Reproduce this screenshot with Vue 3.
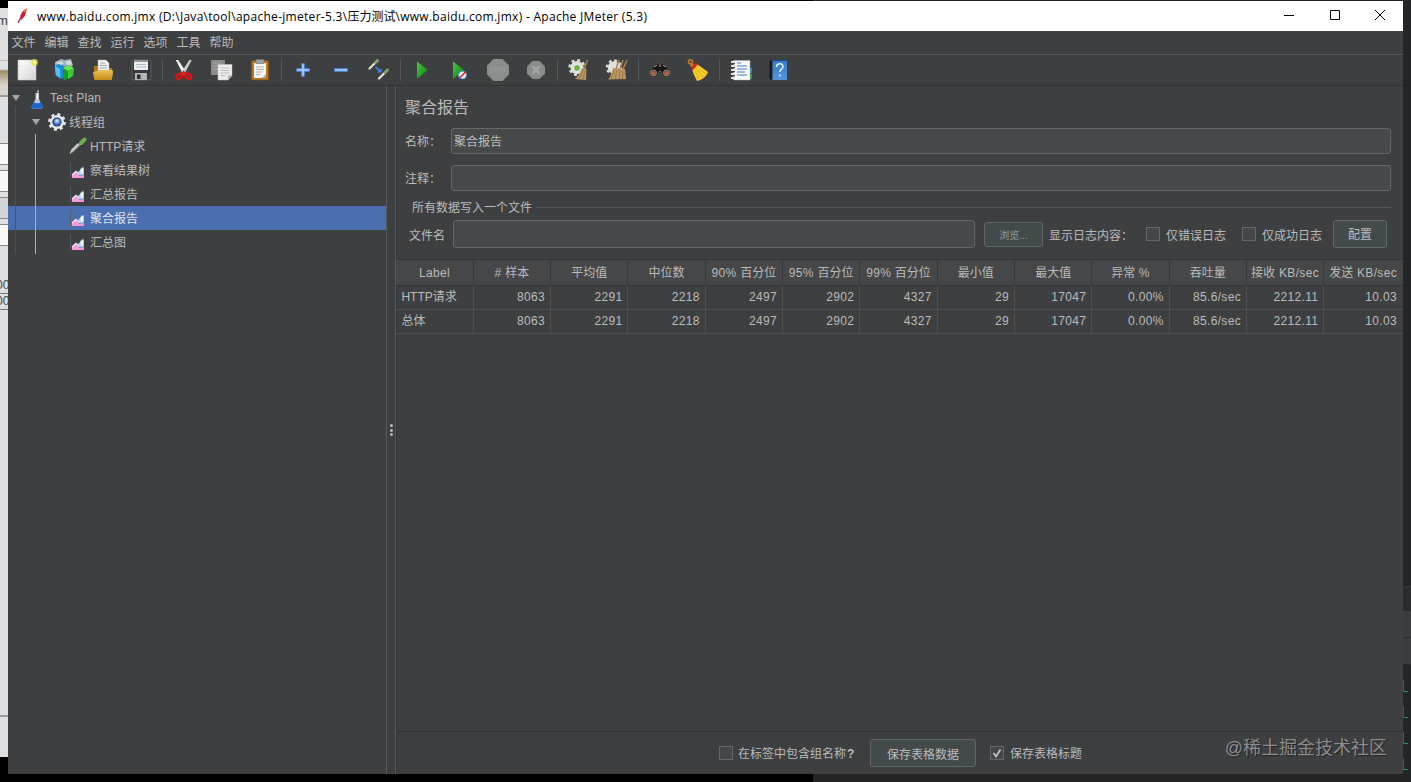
<template>
  <div class="desktop">
    <!-- アイコン定義 -->
    <svg class="defs" aria-hidden="true">
      <defs>
        <linearGradient id="gGreen" x1="0" y1="0" x2="1" y2="1">
          <stop offset="0" stop-color="#4fc948" /><stop offset="1" stop-color="#047d08" />
        </linearGradient>
        <linearGradient id="gPaper" x1="0" y1="0" x2="1" y2="1">
          <stop offset="0" stop-color="#ffffff" /><stop offset="1" stop-color="#d4d4d4" />
        </linearGradient>
        <linearGradient id="gFolder" x1="0" y1="0" x2="0" y2="1">
          <stop offset="0" stop-color="#ecc257" /><stop offset="1" stop-color="#c98a16" />
        </linearGradient>
        <linearGradient id="gBook" x1="0" y1="0" x2="0" y2="1">
          <stop offset="0" stop-color="#3478c8" /><stop offset="1" stop-color="#5594dc" />
        </linearGradient>
        <radialGradient id="gGlow">
          <stop offset="0" stop-color="#ffffb0" /><stop offset=".5" stop-color="#e6e34c" /><stop offset="1" stop-color="#e6e34c" stop-opacity="0" />
        </radialGradient>
        <radialGradient id="gBall" cx=".4" cy=".35">
          <stop offset="0" stop-color="#e4f1ff" /><stop offset="1" stop-color="#3a66b6" />
        </radialGradient>

        <symbol id="new" viewBox="0 0 24 24">
          <path d="M3 2h18v20H3z" fill="url(#gPaper)" stroke="#c8c8c8" stroke-width=".6" />
          <path d="M4.500 4v16" stroke="#ccc" stroke-dasharray="1 3" />
          <circle cx="19.500" cy="4.500" r="4.200" fill="url(#gGlow)" />
        </symbol>
        <symbol id="templates" viewBox="0 0 24 24">
          <path d="M2 4l6-3 4 1 6-1 2 6-4 5-9-1-5-2z" fill="#9fb1ba" />
          <path d="M3 5l5-2 3 2-4 3zM12 4l5-2 2 4-4 2z" fill="#cfdbe0" />
          <path d="M1.500 8l4-2 6 2v12l-4 1-5-4z" fill="#198fd8" />
          <path d="M2 8l5 3v9l-4-3z" fill="#55c3f4" />
          <path d="M10 10l5-3 6 3-1 8-8 4-2-1z" fill="#159b1b" />
          <path d="M10 10l5-3 6 3-6 3z" fill="#68e555" />
          <path d="M15 13l6-3-1 8-5 3z" fill="#3bc83a" />
        </symbol>
        <symbol id="open" viewBox="0 0 24 24">
          <path d="M3 8h7l1 2h10v11H3z" fill="#b77a14" />
          <path d="M7 2h8l3 3v11H7z" fill="#f4f4f4" stroke="#bbb" stroke-width=".5" />
          <path d="M9 5h5M9 7.500h7M9 10h7" stroke="#999" stroke-width=".9" />
          <path d="M2 14c3 0 4-2 7-2h11c2 0 2 1 2 2l-1 7c0 1-1 1-2 1H4c-1 0-1-1-1-2z" fill="url(#gFolder)" />
        </symbol>
        <symbol id="save" viewBox="0 0 24 24">
          <path d="M3 3l1-1h16l2 2v16l-1 2H4l-1-1z" fill="#37393c" stroke="#6d7073" stroke-width=".7" />
          <path d="M5 2h14v10H5z" fill="#eef1f4" />
          <path d="M5 2h14v2H5z" fill="#8d98a6" />
          <path d="M7 6.500h10M7 9h10" stroke="#a9b8c8" />
          <path d="M6 15h12v7H6z" fill="#b3b6b9" />
          <path d="M8 16.500h3.500v4.500H8z" fill="#2c2e30" />
        </symbol>
        <symbol id="cut" viewBox="0 0 24 24">
          <path d="M3.800 2l2.400 0 7.300 11-2.500 3z" fill="#f4f4f4" />
          <path d="M19.700 2l-2.400 0-7.800 12 2.500 3z" fill="#c9cccc" />
          <ellipse cx="7.300" cy="18.300" rx="3" ry="2.200" transform="rotate(-38 7.300 18.300)" fill="none" stroke="#d81515" stroke-width="2.700" />
          <ellipse cx="16.300" cy="18.300" rx="3" ry="2.200" transform="rotate(38 16.300 18.300)" fill="none" stroke="#d81515" stroke-width="2.700" />
          <path d="M10 14.500l1.800-2 1.800 2-1.800 2z" fill="#d81515" />
        </symbol>
        <symbol id="copy" viewBox="0 0 24 24">
          <path d="M1 2h14v15H1z" fill="#8a8c8c" />
          <path d="M3 5h9M3 8h6M3 11h6" stroke="#a5a7a7" />
          <path d="M8 6.500h14v11l-4 4.500H8z" fill="#ecedec" stroke="#c5c5c5" stroke-width=".5" />
          <path d="M10.500 10h9M10.500 12.500h9M10.500 15h9M10.500 17.500h5" stroke="#b5b5b5" stroke-width=".9" />
          <path d="M18 22v-4.500h4z" fill="#b0b2b2" />
        </symbol>
        <symbol id="paste" viewBox="0 0 24 24">
          <rect x="3.500" y="2.500" width="17" height="19.500" rx="1.500" fill="#b5751f" stroke="#8a5513" stroke-width=".6" />
          <path d="M6 5h12v15H6z" fill="#f5f5f5" />
          <path d="M8 1.500h8v4H8z" fill="#a3a59f" stroke="#6e6f6a" stroke-width=".6" />
          <path d="M8 9h8M8 11.500h8M8 14h6M8 16.500h4" stroke="#aaa" stroke-width=".9" />
          <path d="M14 20l4-4v4z" fill="#adadad" />
        </symbol>
        <symbol id="plus" viewBox="0 0 24 24">
          <path d="M10.700 5.700h2.600v5h5v2.600h-5v5h-2.600v-5h-5v-2.600h5z" fill="#a9ccff" stroke="#4a86dc" stroke-width="1" />
        </symbol>
        <symbol id="minus" viewBox="0 0 24 24">
          <path d="M5.500 10.700h13v2.600h-13z" fill="#a9ccff" stroke="#4a86dc" stroke-width="1" />
        </symbol>
        <symbol id="toggle" viewBox="0 0 24 24">
          <path d="M2.500 10.500l5-5" stroke="#e4e4e0" stroke-width="2.200" stroke-linecap="round" />
          <path d="M8.500 4.500l2-2" stroke="#86a86c" stroke-width="2.800" stroke-linecap="round" />
          <path d="M12 20.500l5-5" stroke="#e4e4e0" stroke-width="2.200" stroke-linecap="round" />
          <path d="M18 14.500l2.500-2.500" stroke="#86a86c" stroke-width="2.800" stroke-linecap="round" />
          <path d="M8.500 9l4 3.500" stroke="#3d8ff0" stroke-width="1.600" />
          <path d="M14.500 10v4.500H10z" fill="#3d8ff0" />
        </symbol>
        <symbol id="start" viewBox="0 0 24 24">
          <path d="M7 3.500L18 12 7 21z" fill="url(#gGreen)" />
        </symbol>
        <symbol id="startnp" viewBox="0 0 24 24">
          <path d="M5 3.500L16 12 5 21z" fill="url(#gGreen)" />
          <circle cx="14.500" cy="17" r="4" fill="#f1f3ff" stroke="#5182cf" stroke-width="1" />
          <path d="M11.500 20l6-6" stroke="#d32222" stroke-width="1.600" />
        </symbol>
        <symbol id="stop" viewBox="0 0 24 24">
          <path d="M7.500 1h9L23 7.500v9L16.500 23h-9L1 16.500v-9z" fill="#8b8d8d" />
          <path d="M7 10H4.500v2H7v2.200H4.300M8.500 10h3M10 10v4.500M12.800 10h2.400v4.200h-2.400zM17 14.700V10h2.500v2.400H17" fill="none" stroke="#979999" stroke-width="1" />
        </symbol>
        <symbol id="shutdown" viewBox="0 0 24 24">
          <path d="M8.500 3h7L21 8.500v7L15.500 21h-7L3 15.500v-7z" fill="#8b8d8d" />
          <path d="M8.500 8.500l7 7M15.500 8.500l-7 7" stroke="#a3a5a5" stroke-width="2.800" />
        </symbol>
        <symbol id="clear" viewBox="0 0 24 24">
          <circle cx="10" cy="9.500" r="7.400" fill="none" stroke="#dcddd9" stroke-width="2.400" stroke-dasharray="2.900 2.900" />
          <circle cx="10" cy="9.500" r="6.600" fill="#e0e1dd" />
          <circle cx="10" cy="10" r="2.800" fill="#6cb544" />
          <path d="M20.500 2L17 11" stroke="#a17a47" stroke-width="1.800" />
          <path d="M15 10l4.500 1.500L19 22 8 21c4-3 5-7 7-11z" fill="#b99562" />
          <path d="M16 12l-4 9M18 13l-2 8" stroke="#94703f" stroke-width=".8" />
        </symbol>
        <symbol id="clearall" viewBox="0 0 24 24">
          <circle cx="9" cy="9.500" r="7" fill="none" stroke="#dcddd9" stroke-width="2.400" stroke-dasharray="2.750 2.750" />
          <circle cx="9" cy="9.500" r="6.200" fill="#e0e1dd" />
          <path d="M14 2l-3 9M18 2l-3 9M22 2l-4 9" stroke="#a98350" stroke-width="1.500" />
          <path d="M8 10l12 1 1 10-18 0.500c3-3 4-7 5-11.500z" fill="#b99562" />
          <path d="M9 12l-3 9M12 12l-2 9M15 12l-1 9M18 13l-.5 8" stroke="#94703f" stroke-width=".8" />
        </symbol>
        <symbol id="search" viewBox="0 0 24 24">
          <path d="M6 7l3-2 3 2 3-2 3 2 5 8c0 6-8 6-9 1l-1-3h-2l-1 3c-1 5-9 5-9-1z" fill="#1a1918" stroke="#5c5c5a" stroke-width=".7" />
          <path d="M6 9l3-2M18 9l-3-2M11 8h2" stroke="#b0b0ae" stroke-width="1" />
          <circle cx="5.500" cy="15" r="3" fill="#8a4a30" stroke="#999" stroke-width=".8" />
          <circle cx="18.500" cy="15" r="3" fill="#8a4a30" stroke="#999" stroke-width=".8" />
          <circle cx="5.500" cy="15.500" r="1.400" fill="#c0704a" /><circle cx="18.500" cy="15.500" r="1.400" fill="#c0704a" />
        </symbol>
        <symbol id="broom" viewBox="0 0 24 24">
          <circle cx="4.500" cy="3.800" r="2" fill="none" stroke="#c87a2a" stroke-width="1.600" />
          <path d="M5 6l4 4" stroke="#c87a2a" stroke-width="3.400" />
          <path d="M6 11l5-5 11 8c-1 4-6 8-11 9-2-4-4-8-5-12z" fill="#f4cc2b" />
          <path d="M5.500 11.500l5.500-6" stroke="#cf2a18" stroke-width="2.600" />
          <path d="M9 13l4 8M11 12l6 7M13 11l7 5" stroke="#d3a31a" stroke-width=".7" />
        </symbol>
        <symbol id="notes" viewBox="0 0 24 24">
          <path d="M20 10h3v5h-3z" fill="#2f7fd6" /><path d="M20 16h3v5h-3z" fill="#21a32b" />
          <path d="M4.500 2.500H21V22H4.500z" fill="#fbfbfb" stroke="#b7b7b7" stroke-width=".5" />
          <path d="M8 5h4M8 8h10M8 11h10M8 14h8M8 17h10" stroke="#3f7cc0" stroke-width="1.100" />
          <path d="M2 4h4M2 8h4M2 12h4M2 16h4M2 20h4" stroke="#e2e2e2" stroke-width="1.800" />
          <path d="M4 5.700h2M4 9.700h2M4 13.700h2M4 17.700h2" stroke="#444" stroke-width="1.200" />
        </symbol>
        <symbol id="help" viewBox="0 0 24 24">
          <path d="M2.500 3l3-1v20l-3-1z" fill="#161a20" />
          <path d="M5.500 2H20v20H5.500z" fill="url(#gBook)" />
          <path d="M5.500 2.500H20" stroke="#1b4f92" />
          <path d="M9.500 9c0-4.300 6.500-4.300 6.500-.4 0 2.500-3.200 2.700-3.200 5.400M12.800 16.500v2" fill="none" stroke="#e6effa" stroke-width="1.600" />
        </symbol>

        <symbol id="flask" viewBox="0 0 20 20">
          <path d="M8.500 4h3.500v6l4 8c0 1-1 1.500-2 1.500H6.500c-1 0-2-.5-2-1.500l4-8z" fill="#c2c9cf" />
          <path d="M10.500 4v6" stroke="#fff" stroke-width="1.300" fill="none" />
          <path d="M7 13h6.700l2.300 5c0 1-1 1.500-2 1.500H6.500c-1 0-2-.5-2-1.500z" fill="#1766cc" />
          <ellipse cx="10.300" cy="13.300" rx="3" ry="1" fill="#9fcbf7" />
          <path d="M11 1.500v2" stroke="#dfe5ea" stroke-width="1.500" />
        </symbol>
        <symbol id="gear" viewBox="0 0 20 20">
          <circle cx="10" cy="10" r="7.500" fill="none" stroke="#e6e7e8" stroke-width="2.800" stroke-dasharray="2.950 2.950" />
          <circle cx="10" cy="10" r="7" fill="#e6e7e8" />
          <circle cx="10" cy="10" r="4.600" fill="#1b3f86" />
          <circle cx="10.500" cy="10" r="3.600" fill="url(#gBall)" />
        </symbol>
        <symbol id="dropper" viewBox="0 0 20 20">
          <path d="M1.500 18l2-4.500 7-7 2 2-7.500 7.500z" fill="#d5dbd5" />
          <path d="M2 18l9-9.500" stroke="#8c908c" stroke-width=".8" />
          <path d="M9.500 5.500l5 5" stroke="#222" stroke-width="1.600" />
          <path d="M12.500 7.500l4-4" stroke="#6fae52" stroke-width="4" stroke-linecap="round" />
        </symbol>
        <symbol id="chart" viewBox="0 0 20 20">
          <path d="M2.500 2v16.500" stroke="#5b5d60" stroke-width=".8" />
          <path d="M4 18v-3l4-3.500 3 2.500 5-1v5z" fill="#f49ad4" />
          <path d="M4 15l4-3.500 3 2.500" fill="none" stroke="#ffd9f2" stroke-width="1.600" />
          <path d="M9 12.500c3-.5 3-5 6.500-5.500v7c-1 2-3 2.500-4.500 1z" fill="#b4d4f8" />
          <path d="M12.500 10c1-1.500 2-2 3-2v5.500c-2 1-3 0-3-3.500z" fill="#f0f7ff" />
          <path d="M11 15.500c2 .5 3.500 0 4.500-1.500" fill="none" stroke="#6f84cc" stroke-width="1" />
        </symbol>
      </defs>
    </svg>

    <!-- 左側に見えている背面ウィンドウ -->
    <div class="behind-left">
      <div class="behind-left__m">m</div>
      <div class="behind-left__bar"></div>
      <div class="behind-left__slot plain"></div>
      <div class="behind-left__slot"></div>
      <div class="behind-left__slot"></div>
      <div class="behind-left__slot grey"></div>
      <div class="behind-left__slot"></div>
      <div class="behind-left__gap"></div>
      <div class="behind-left__num">00</div>
      <div class="behind-left__num">00</div>
      <div class="behind-left__rest"></div>
      <div class="behind-left__foot"></div>
    </div>

    <main class="window">
      <header class="titlebar">
        <svg class="feather" viewBox="0 0 12 18">
          <path d="M1 16L3.500 11" stroke="#7b3146" stroke-width="1.200" />
          <path d="M3 11.500C3 7 6 3 9.500 1.500 9.500 6 8 10 4 13z" fill="#c9213a" />
          <path d="M6.500 5C7.500 3 8.500 2 9.700 1.300l-.5 4z" fill="#ee8b2c" />
        </svg>
        <span class="titlebar__text">www.baidu.com.jmx (D:\Java\tool\apache-jmeter-5.3\<span class="song">压力测试</span>\www.baidu.com.jmx) - Apache JMeter (5.3)</span>
        <div class="titlebar__ctrl">
          <svg viewBox="0 0 12 12"><path d="M1 5.500h10" /></svg>
          <svg viewBox="0 0 12 12"><path d="M1.500 .500h9v9h-9z" /></svg>
          <svg viewBox="0 0 12 12"><path d="M1 0l10 10M11 0L1 10" /></svg>
        </div>
      </header>

      <nav class="menu">
        <span v-for="m in menus" :key="m">{{ m }}</span>
      </nav>

      <div class="toolbar">
        <template v-for="(group, gi) in tools" :key="gi">
          <i v-if="gi" class="toolbar__sep"></i>
          <button v-for="t in group" :key="t" class="tool"><svg><use :href="'#' + t" /></svg></button>
        </template>
      </div>

      <div class="body">
        <aside class="tree">
          <div
            v-for="n in nodes"
            :key="n.label"
            class="node"
            :class="['lv' + n.level, { active: n.label === selected }]"
            @click="selected = n.label"
          >
            <i v-if="n.level < 2" class="node__arrow"></i>
            <svg class="node__icon"><use :href="'#' + n.icon" /></svg>
            <span class="node__label">{{ n.label }}</span>
          </div>
          <i class="guide guide--root"></i>
          <i class="guide guide--group"></i>
        </aside>

        <div class="divider"><i></i><i></i><i></i></div>

        <section class="panel">
          <h1>聚合报告</h1>
          <label class="field"><span>名称：</span><input v-model="name" /></label>
          <label class="field"><span>注释：</span><input v-model="comment" /></label>

          <div class="legend"><span>所有数据写入一个文件</span></div>
          <div class="filerow">
            <span class="filerow__label">文件名</span>
            <input v-model="filename" />
            <button class="btn browse">浏览...</button>
            <span class="filerow__log">显示日志内容：</span>
            <label class="check"><i></i>仅错误日志</label>
            <label class="check"><i></i>仅成功日志</label>
            <button class="btn conf">配置</button>
          </div>

          <div class="table">
            <div class="tr th">
              <div v-for="c in columns" :key="c.join('')"><span class="lat">{{ c[0] }}</span>{{ c[1] }}<span class="lat">{{ c[2] }}</span></div>
            </div>
            <div v-for="r in rows" :key="r[0]" class="tr">
              <div v-for="(v, i) in r" :key="i" :class="{ lat: i > 0 }">{{ v }}</div>
            </div>
          </div>

          <footer class="footer">
            <label class="check"><i></i><span>在标签中包含组名称<b>?</b></span></label>
            <button class="btn savedata">保存表格数据</button>
            <label class="check">
              <i><svg viewBox="0 0 12 12"><path d="M2.500 6l2.500 3.500L9.500 2.500" /></svg></i><span>保存表格标题</span>
            </label>
            <span class="mark">@稀土掘金技术社区</span>
          </footer>
        </section>
      </div>
    </main>

    <!-- 右側に見えているエディタ -->
    <div class="behind-right">
      <div class="behind-right__a"></div>
      <div class="behind-right__b"></div>
      <div class="behind-right__b"></div>
      <div v-for="i in 4" :key="i" class="behind-right__tick"></div>
    </div>
  </div>
</template>

<script setup>
import { ref } from 'vue'

const menus = ['文件', '编辑', '查找', '运行', '选项', '工具', '帮助']

const tools = [
  ['new', 'templates', 'open', 'save'],
  ['cut', 'copy', 'paste'],
  ['plus', 'minus', 'toggle'],
  ['start', 'startnp', 'stop', 'shutdown'],
  ['clear', 'clearall'],
  ['search', 'broom'],
  ['notes', 'help'],
]

const nodes = [
  { label: 'Test Plan', icon: 'flask', level: 0 },
  { label: '线程组', icon: 'gear', level: 1 },
  { label: 'HTTP请求', icon: 'dropper', level: 2 },
  { label: '察看结果树', icon: 'chart', level: 2 },
  { label: '汇总报告', icon: 'chart', level: 2 },
  { label: '聚合报告', icon: 'chart', level: 2 },
  { label: '汇总图', icon: 'chart', level: 2 },
]

const selected = ref('聚合报告')
const name = ref('聚合报告')
const comment = ref('')
const filename = ref('')

// [前の英数字, 中国語, 後ろの英数字]
const columns = [
  ['Label', '', ''],
  ['# ', '样本', ''],
  ['', '平均值', ''],
  ['', '中位数', ''],
  ['90% ', '百分位', ''],
  ['95% ', '百分位', ''],
  ['99% ', '百分位', ''],
  ['', '最小值', ''],
  ['', '最大值', ''],
  ['', '异常', ' %'],
  ['', '吞吐量', ''],
  ['', '接收', ' KB/sec'],
  ['', '发送', ' KB/sec'],
]

const stats = ['8063', '2291', '2218', '2497', '2902', '4327', '29', '17047', '0.00%', '85.6/sec', '2212.11', '10.03']
const rows = [
  ['HTTP请求', ...stats],
  ['总体', ...stats],
]
</script>

<style>
body { background: #000; overflow: hidden; }
</style>

<style scoped>
* { box-sizing: border-box; }

.desktop {
  display: grid;
  grid-template-columns: 8px 1395px 8px;
  width: 1411px;
  height: 782px;
  overflow: hidden;
  background: linear-gradient(90deg, #000 813px, #242425 813px);
  font-family: "Liberation Sans", "Noto Sans CJK SC", sans-serif;
  font-size: 12px;
  color: #bbbbbb;
}

.defs { position: absolute; width: 0; height: 0; }

.lat { letter-spacing: 0.33px; white-space: pre; }

button, input { font: inherit; color: inherit; }

/* 背面ウィンドウ(左) */
.behind-left {
  display: flex;
  flex-direction: column;
  margin-top: 8px;
  height: 749px;
  background: #dfe0e2;
  overflow: hidden;
  color: #444;
}
.behind-left__m { height: 52px; padding-top: 5px; font-size: 13px; text-indent: -3px; }
.behind-left__bar { flex: none; height: 37px; border-top: 1px solid #bbb; border-bottom: 2px solid #999; background: linear-gradient(#dfe0e2 8px, #a28b62 10px, #d8d4c9 24px); }
.behind-left__slot { flex: none; height: 22px; margin-top: 5px; border: 1px solid #888; border-width: 1px 0; background: #f8f8f8; }
.behind-left__slot.plain { height: 36px; border: 0; background: none; }
.behind-left__slot.grey { background: #d3d4d6; }
.behind-left__gap { flex: none; height: 32px; }
.behind-left__num { flex: none; height: 16px; border-bottom: 1px solid #777; font-size: 12px; line-height: 15px; text-indent: -4px; }
.behind-left__rest { flex: 1; }
.behind-left__foot { height: 42px; border-top: 2px solid #9b9c9d; }

/* 背面エディタ(右) */
.behind-right {
  padding-top: 586px;
  height: 782px;
  background: #242526;
}
.behind-right__a { height: 25px; border-top: 1px solid #353637; background: #2b2c2d; }
.behind-right__b { height: 27px; border-bottom: 1px solid #2a2b2c; background: #3a3c3d; }
.behind-right__tick { width: 5px; height: 12px; margin: 14px 0 0; border-left: 1px solid #17705a; border-bottom: 1px solid #1d9478; }
.behind-right__b + .behind-right__tick { margin-top: 15px; }

/* ウィンドウ */
.window {
  display: flex;
  flex-direction: column;
  height: 773px;
  margin-top: 1px;
  background: #3d3f41;
  min-width: 0;
}

.titlebar {
  display: flex;
  align-items: center;
  height: 30px;
  padding-left: 9px;
  background: #fff;
  color: #000;
}
.feather { width: 12px; height: 18px; margin-right: 8px; }
.titlebar__text {
  flex: 1;
  padding-bottom: 1px;
  font-family: "Open Sans", "Noto Sans", "Noto Sans CJK SC", sans-serif;
  font-size: 12px;
  letter-spacing: 0.29px;
  white-space: nowrap;
}
.song { letter-spacing: 0; }
.titlebar__ctrl { display: flex; gap: 33.5px; padding-right: 17px; }
.titlebar__ctrl svg { width: 12px; height: 12px; fill: none; stroke: #000; }

.menu {
  display: flex;
  gap: 9px;
  align-items: center;
  height: 24px;
  padding: 0 0 2px 3.5px;
  border-bottom: 1px solid #555759;
}

.toolbar {
  display: flex;
  align-items: center;
  height: 31px;
  border-bottom: 1px solid #303233;
}
.toolbar__sep { width: 5px; height: 22px; border-left: 2px solid transparent; background: linear-gradient(90deg, #555759 1px, transparent 1px); background-origin: padding-box; background-repeat: no-repeat; }
.tool { display: flex; align-items: center; justify-content: center; width: 38px; height: 28px; padding: 0; border: 0; background: none; }
.tool svg { width: 24px; height: 24px; }

.body { display: flex; flex: 1; min-height: 0; }

/* ツリー */
.tree { position: relative; width: 378px; }
.node { display: flex; align-items: center; height: 24px; line-height: 24px; white-space: nowrap; }
.node.lv0 { padding-left: 4px; }
.node.lv1 { padding-left: 24px; }
.node.lv2 { padding-left: 60px; }
.node.active { background: #4b6eaf; color: #dfe3ea; }
.node__arrow { width: 0; height: 0; margin-right: 7px; border: 4.5px solid transparent; border-top: 6px solid #a5a7a8; border-bottom: 0; }
.node__icon { width: 20px; height: 20px; margin-right: 3px; }
.lv0 .node__icon { margin-top: 1px; }
.lv0 .node__label { letter-spacing: 0.2px; }
.lv2 .node__icon { margin-right: 2px; }
.lv1 .node__label, .lv2 .node__label { padding-top: 2px; line-height: 22px; }
.lv1 .node__icon { margin-right: 2px; }
.guide { position: absolute; width: 1px; }
.guide--root { left: 7px; top: 20px; height: 148px; background: #4d5052; }
.guide--group { left: 27px; top: 48px; height: 120px; background: #72bdf3; }

.divider {
  display: flex;
  flex-direction: column;
  align-items: center;
  justify-content: center;
  gap: 1.5px;
  width: 10px;
  border: 1px solid #57595b;
  border-width: 0 1px;
}
.divider i { width: 3px; height: 3px; border-radius: 50%; background: #b8babb; }

/* 右パネル */
.panel { display: flex; flex-direction: column; flex: 1; min-width: 0; border-left: 1px solid #333536; }
h1 { height: 42px; margin: 0; padding-left: 8px; font-size: 16px; font-weight: 400; line-height: 44px; }

.field { display: flex; align-items: center; height: 26px; margin: 0 12px 11px 8px; }
.field span { width: 46px; padding-bottom: 1px; white-space: nowrap; }
input { min-width: 0; border: 1px solid #646869; border-radius: 3px; background: #45494a; padding: 0 2px 2px; outline: none; }
.field input { flex: 1; height: 26px; }

.legend { display: flex; align-items: center; gap: 4px; height: 12px; margin: -1px 12px 0 15px; line-height: 12px; }
.legend span { padding-top: 2px; }
.legend::after { content: ""; flex: 1; height: 1px; background: #55585a; }

.filerow { display: flex; align-items: center; height: 28px; margin: 7px 16px 11px 12px; white-space: nowrap; }
.filerow__label { width: 44px; }
.filerow input { width: 522px; height: 28px; }
.btn { height: 28px; padding: 0; border: 1px solid #5e6868; border-radius: 3px; background: #424a4a; }
.browse { width: 59px; height: 25px; margin: 0 6px 0 9px; font-size: 10px; color: #979a9a; }
.filerow__log { width: 97px; }
.check { display: flex; align-items: center; white-space: nowrap; }
.check i { display: flex; width: 14px; height: 14px; margin-right: 6px; border: 1px solid #66696b; background: #43474a; }
.check b { font-weight: 700; margin-left: 1px; }
.check svg { width: 12px; height: 12px; fill: none; stroke: #c2c4c4; stroke-width: 1.8; }
.filerow .check { width: 96px; }
.conf { width: 54px; margin-left: -5px; padding-bottom: 1px; flex: none; }

/* 集計テーブル */
.table { flex: 1; margin-left: -0.6px; border-top: 1px solid #333536; }
.tr { display: grid; grid-template-columns: repeat(12, 77.33px) 1fr; height: 24px; line-height: 22px; border-bottom: 1px solid #4e5052; }
.tr > div { padding-right: 5px; border-right: 1px solid #4e5052; text-align: right; white-space: nowrap; min-width: 0; }
.tr > div:first-child { padding-left: 5px; text-align: left; }
.tr.th { height: 26px; line-height: 27px; background: #454749; border-bottom-color: #333536; }
.tr.th > div { padding: 0; text-align: center; border-right-color: #37393a; }
.tr > div:last-child { border-right-color: transparent; }

.footer { position: relative; display: flex; align-items: center; height: 43px; padding-left: 322px; border-top: 1px solid #303233; }
.footer .check:first-child { width: 151px; }
.footer .check:first-child i { margin-right: 5px; }
.footer .check span { padding-bottom: 2px; }
.savedata { width: 106px; margin-right: 14px; }
.mark {
  position: absolute;
  right: 16px;
  top: 3px;
  font-size: 18px;
  line-height: 26px;
  color: #8b8d8e;
  text-shadow: 1px 1px 1px #222;
}
</style>
